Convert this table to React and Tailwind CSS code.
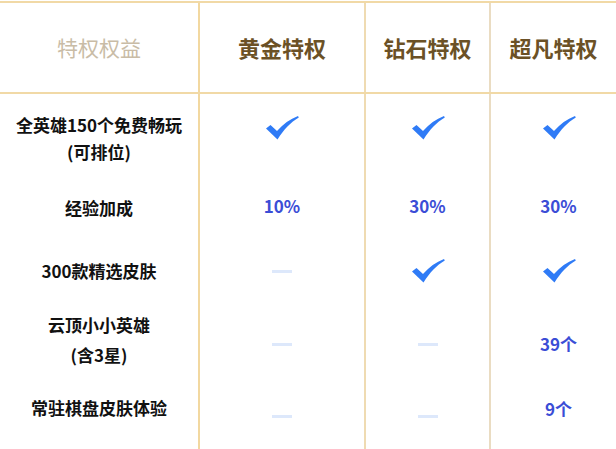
import React from "react";

const font = { fontFamily: '"Noto Sans CJK SC", "Noto Sans", sans-serif' };

const Check = ({ className = "" }) => (
    <svg viewBox="0 0 34 24" className={`h-[24px] w-[34px] ${className}`}>
        <path
            d="M1 12.5 L5.5 9 L12 15 C18 8 25 3 33 0 L33.8 1.6 C25.5 6.5 19 13.5 12.5 23.5 Z"
            fill="#2f7bf6"
        />
    </svg>
);

const Dash = ({ className = "" }) => <div className={`h-[3px] w-[20px] bg-[#dde8fb] ${className}`} />;

const Num = ({ children, className = "" }) => (
    <span className={`text-[17px] font-bold text-[#3b4dd6] ${className}`}>{children}</span>
);

const rows = [
    {
        h: "h-[88px]",
        label: (
            <>
                <div>全英雄150个免费畅玩</div>
                <div>(可排位)</div>
            </>
        ),
        lh: "leading-[27px]",
        cells: [<Check className="mb-5" />, <Check className="mb-5" />, <Check className="mb-5" />],
    },
    {
        h: "h-[52px]",
        label: <div>经验加成</div>,
        cells: [<Num className="mb-1">10%</Num>, <Num className="mb-1">30%</Num>, <Num className="mb-1">30%</Num>],
    },
    {
        h: "h-[74px]",
        label: <div>300款精选皮肤</div>,
        cells: [<Dash />, <Check />, <Check />],
    },
    {
        h: "h-[64px]",
        label: (
            <>
                <div>云顶小小英雄</div>
                <div>(含3星)</div>
            </>
        ),
        lh: "leading-[30px]",
        cells: [<Dash className="mt-2" />, <Dash className="mt-2" />, <Num className="mt-2">39个</Num>],
    },
    {
        h: "h-[78px]",
        label: <div className="mb-1.5">常驻棋盘皮肤体验</div>,
        cells: [<Dash className="mt-2.5" />, <Dash className="mt-2.5" />, <Num className="mb-1">9个</Num>],
    },
];

const cols = "grid grid-cols-[200px_166px_125px_125px]";

export default function App() {
    return (
        <div className="w-[616px] h-[449px] bg-white overflow-hidden" style={font}>
            {/* Header */}
            <div className={`${cols} h-[93px] border-y-2 border-[#f1d9a6] mt-px`}>
                <div className="flex items-center justify-center border-r-2 border-[#f2d8a0] text-[21px] text-[#c9bca6]">
                    特权权益
                </div>
                <div className="flex items-center justify-center border-r-2 border-[#efdbb2] text-[22px] font-bold text-[#6b5126]">
                    黄金特权
                </div>
                <div className="flex items-center justify-center border-r-2 border-[#eadcc2] text-[22px] font-bold text-[#6b5126]">
                    钻石特权
                </div>
                <div className="flex items-center justify-center text-[22px] font-bold text-[#6b5126]">
                    超凡特权
                </div>
            </div>

            {/* Body */}
            {rows.map((row, i) => (
                <div key={i} className={`${cols} ${row.h}`}>
                    <div
                        className={`flex flex-col items-center justify-center border-r-2 border-[#f2d8a0] text-[17px] font-bold text-[#111] ${row.lh || ""}`}
                    >
                        {row.label}
                    </div>
                    <div className="flex items-center justify-center border-r-2 border-[#efdbb2]">{row.cells[0]}</div>
                    <div className="flex items-center justify-center border-r-2 border-[#eadcc2]">{row.cells[1]}</div>
                    <div className="flex items-center justify-center pl-2.5">{row.cells[2]}</div>
                </div>
            ))}
        </div>
    );
}
